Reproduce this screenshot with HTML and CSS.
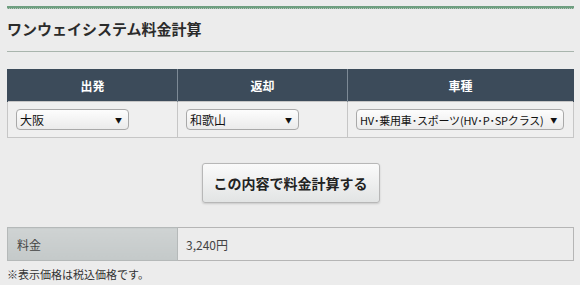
FILE: index.html
```html
<!DOCTYPE html>
<html lang="ja">
<head>
    <meta charset="UTF-8">
    <meta name="viewport" content="width=device-width, initial-scale=1.0">
    <title>ワンウェイシステム料金計算</title>
    <link rel="stylesheet" href="styles.css">
</head>
<body>
    <div class="page">
        <div class="top-rule"></div>
        <h2 class="title">ワンウェイシステム料金計算</h2>

        <table class="search">
            <colgroup>
                <col class="col-s">
                <col class="col-s">
                <col>
            </colgroup>
            <tr>
                <th>出発</th>
                <th>返却</th>
                <th>車種</th>
            </tr>
            <tr>
                <td>
                    <div class="select select-s"><span>大阪</span><i>▼</i></div>
                </td>
                <td>
                    <div class="select select-s"><span>和歌山</span><i>▼</i></div>
                </td>
                <td>
                    <div class="select select-l"><span>HV･乗用車･スポーツ(HV･P･SPクラス)</span><i>▼</i></div>
                </td>
            </tr>
        </table>

        <div class="btn-area">
            <button class="calc-button">この内容で料金計算する</button>
        </div>

        <table class="result">
            <colgroup>
                <col class="col-s">
                <col>
            </colgroup>
            <tr>
                <th>料金</th>
                <td>3,240円</td>
            </tr>
        </table>
        <p class="note">※表示価格は税込価格です。</p>
    </div>
</body>
</html>
```

FILE: styles.css
```css
body {
    font-family: "Noto Sans CJK JP", "Liberation Sans", sans-serif;
    margin: 0;
    padding: 0;
    background-color: #ececec;
    color: #333;
}

.page {
    padding: 6px 6px 0 7px;
}

.top-rule {
    height: 2px;
    background-color: #6f9f80;
    border-bottom: 1px dotted #b8c8bc;
}

.title {
    margin: 0;
    padding: 9px 0 12px;
    font-size: 15px;
    line-height: 21px;
    font-weight: bold;
    color: #2b2b2b;
    border-bottom: 1px solid #a9b5ad;
}

.col-s {
    width: 170px;
}

.search {
    width: 100%;
    margin-top: 17px;
    border-collapse: collapse;
    table-layout: fixed;
}

.search th {
    height: 32px;
    background-color: #3c4b5a;
    color: #fff;
    font-size: 12px;
    font-weight: bold;
    border-left: 1px solid #7d8a96;
    border-right: 1px solid #7d8a96;
    padding: 0;
}

.search th:first-child {
    border-left: 1px solid #3c4b5a;
}

.search th:last-child {
    border-right: 1px solid #3c4b5a;
}

.search td {
    height: 35px;
    padding: 0 8px;
    background-color: #efefef;
    border: 1px solid #c6c6c6;
}

.select {
    display: flex;
    align-items: center;
    justify-content: space-between;
    gap: 4px;
    height: 21px;
    padding: 0 6px 0 3px;
    background: linear-gradient(#fdfdfd, #ebebeb);
    border: 1px solid #a9a9a9;
    border-radius: 4px;
    font-size: 12px;
    color: #111;
    box-sizing: border-box;
    white-space: nowrap;
    overflow: hidden;
}

.select i {
    font-style: normal;
    font-size: 7px;
}

.select-s {
    width: 113px;
}

.select-l {
    width: 208px;
    font-size: 11px;
    letter-spacing: -0.2px;
}

.btn-area {
    display: flex;
    justify-content: center;
    padding: 25px 0 24px;
}

.calc-button {
    width: 178px;
    height: 40px;
    font-family: inherit;
    font-size: 14px;
    font-weight: bold;
    color: #222;
    background: linear-gradient(#fafafa, #e2e4e4);
    border: 1px solid #b7b7b7;
    border-radius: 3px;
    box-shadow: 0 1px 2px rgba(0, 0, 0, 0.15);
}

.result {
    width: 100%;
    border-collapse: collapse;
    table-layout: fixed;
}

.result th {
    height: 32px;
    padding: 0 0 0 9px;
    text-align: left;
    font-size: 12px;
    font-weight: normal;
    color: #444;
    background: linear-gradient(#cfd3d3, #c4c9c9);
    border: 1px solid #b5b9b9;
}

.result td {
    padding: 0 0 0 8px;
    font-size: 12px;
    color: #444;
    background-color: #ececec;
    border: 1px solid #b5b5b5;
}

.note {
    margin: 5px 0 0;
    font-size: 11px;
    color: #333;
}
```
